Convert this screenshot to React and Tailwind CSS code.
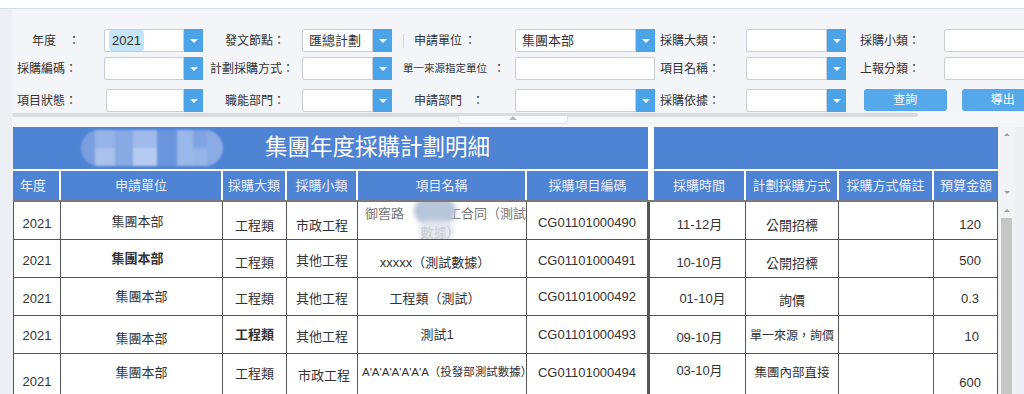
import React from 'react';

const FONT = { fontFamily: '"Liberation Sans", "Noto Sans CJK TC", sans-serif' };

function Arrow() {
    return (
        <div className="w-[19px] h-full bg-[#4ba4e8] flex items-center justify-center">
            <div className="w-0 h-0 border-l-[4px] border-r-[4px] border-t-[4px] border-l-transparent border-r-transparent border-t-white"></div>
        </div>
    );
}

function Sel({ value, hl, arrow = true, className = '' }) {
    return (
        <div className={`flex h-[23px] ${className}`}>
            <div className="flex-1 bg-white border border-[#c9ced6] rounded-l-[2px] flex items-center pl-[4px] text-[13px] text-[#333] overflow-hidden whitespace-nowrap">
                {hl ? <span className="bg-[#c4e5f7] rounded-[3px] px-[3px] py-[1px]">{value}</span> : <span className="pl-[2px]">{value}</span>}
            </div>
            {arrow && <Arrow />}
        </div>
    );
}

function Label({ children, className = '' }) {
    return <div className={`flex items-center h-[23px] whitespace-nowrap text-[#333] ${className}`}>{children}</div>;
}

const headers = [
    { t: '年度', c: 'justify-start pl-[7px]' },
    { t: '申請單位' },
    { t: '採購大類' },
    { t: '採購小類' },
    { t: '項目名稱' },
    { t: '採購項目編碼' },
];
const headers2 = ['採購時間', '計劃採購方式', '採購方式備註', '預算金額'];

// [text, classes, font-size class]
const rows = [
    {
        h: 'h-[38px]',
        cells: [
            ['2021', 'pt-[13px]'],
            ['集團本部', 'pt-[11px] pr-[8px]'],
            ['工程類', 'pt-[15px]'],
            ['市政工程', 'pt-[15px]'],
            ['__blur__', ''],
            ['CG01101000490', 'pt-[12px]'],
            ['11-12月', 'pt-[14px]'],
            ['公開招標', 'pt-[15px]'],
            ['', ''],
            ['120', 'pt-[14px] justify-end pr-[16px]'],
        ],
    },
    {
        h: 'h-[38px]',
        cells: [
            ['2021', 'pt-[12px]'],
            ['集團本部', 'pt-[10px] pr-[8px] font-bold text-[#111]'],
            ['工程類', 'pt-[14px]'],
            ['其他工程', 'pt-[12px]'],
            ['xxxxx（測試數據）', 'pt-[14px] pr-[14px]'],
            ['CG01101000491', 'pt-[12px]'],
            ['10-10月', 'pt-[14px]'],
            ['公開招標', 'pt-[15px]'],
            ['', ''],
            ['500', 'pt-[12px] justify-end pr-[16px]'],
        ],
    },
    {
        h: 'h-[38px]',
        cells: [
            ['2021', 'pt-[12px]'],
            ['集團本部', 'pt-[10px]'],
            ['工程類', 'pt-[12px]'],
            ['其他工程', 'pt-[12px]'],
            ['工程類（測試）', 'pt-[12px] pr-[14px]'],
            ['CG01101000492', 'pt-[10px]'],
            ['01-10月', 'pt-[12px] pl-[6px]'],
            ['詢價', 'pt-[14px]'],
            ['', ''],
            ['0.3', 'pt-[12px] justify-end pr-[18px]'],
        ],
    },
    {
        h: 'h-[38px]',
        cells: [
            ['2021', 'pt-[11px]'],
            ['集團本部', 'pt-[14px]'],
            ['工程類', 'pt-[10px] font-bold text-[#111]'],
            ['其他工程', 'pt-[12px]'],
            ['測試1', 'pt-[10px] pr-[10px]'],
            ['CG01101000493', 'pt-[10px]'],
            ['09-10月', 'pt-[13px]'],
            ['單一來源，詢價', 'pt-[11px]', 'text-[12px]'],
            ['', ''],
            ['10', 'pt-[12px] justify-end pr-[18px]'],
        ],
    },
    {
        h: 'h-[50px]',
        cells: [
            ['2021', 'pt-[19px]'],
            ['集團本部', 'pt-[10px]'],
            ['工程類', 'pt-[11px]'],
            ['市政工程', 'pt-[13px] pl-[4px]'],
            ["A'A'A'A'A'A'A（投發部測試數據）", 'pt-[9px] justify-start pl-[4px]', 'text-[11.5px]'],
            ['CG01101000494', 'pt-[10px]'],
            ['03-10月', 'pt-[8px]'],
            ['集團內部直接', 'pt-[10px]', 'text-[12.5px]'],
            ['', ''],
            ['600', 'pt-[20px] justify-end pr-[16px]'],
        ],
    },
];

const bodyW = ['w-[48px] border-l', 'w-[162px]', 'w-[64px]', 'w-[71px]', 'w-[169px]', 'w-[121px]'];
const headW = ['w-[48px]', 'w-[162px]', 'w-[64px]', 'w-[71px]', 'w-[169px]', 'w-[121px]'];
const bodyW2 = ['w-[92px]', 'w-[93px]', 'w-[95px]', 'w-[64px]'];

function BodyCell({ cell, w }) {
    const [t, c, size = 'text-[13px]'] = cell;
    if (t === '__blur__') {
        return (
            <div className={`${w} relative border-r border-b border-[#555] overflow-hidden text-[13px] text-[#777] leading-[19px] pt-[2px]`}>
                <div className="whitespace-nowrap pl-[7px]">
                    <span>御窖路</span>
                    <span className="inline-block w-[44px]"></span>
                    <span>工合同（測試</span>
                </div>
                <div className="text-center pr-[4px]">數據）</div>
                <div className="absolute left-[56px] top-[-4px] w-[42px] h-[26px] rounded-full bg-[#b8c6da] blur-[2px]"></div>
                <div className="absolute left-[60px] top-[18px] w-[36px] h-[22px] rounded-full bg-[#dfe3ea] blur-[2px] opacity-80"></div>
            </div>
        );
    }
    return (
        <div className={`${w} flex justify-center items-start border-r border-b border-[#555] text-[#333] leading-[18px] whitespace-nowrap overflow-hidden ${size} ${c}`}>
            {t}
        </div>
    );
}

export default function App() {
    return (
        <div className="w-[1024px] h-[394px] overflow-hidden bg-[#eceff3]" style={FONT}>
            <div className="h-[8px] bg-white"></div>
            <div className="border-t border-[#d3dcea] pl-[12px]">
                {/* Filter panel */}
                <div className="bg-[#f3f5f8] h-[104px] pt-[20px]">
                    <div className="grid grid-cols-[92px_99px_99px_90px_123px_140px_91px_100px_98px_100px] w-[1032px] text-[12px]">
                        {/* row 1 */}
                        <Label className="pl-[20px]">年度<span className="ml-[12px]">：</span></Label>
                        <Sel value="2021" hl />
                        <Label className="pl-[22px]">發文節點：</Label>
                        <Sel value="匯總計劃" />
                        <Label className="pl-[11px]"><span className="w-px h-[14px] bg-[#d6d9de] mr-[10px]"></span>申請單位<span className="ml-[2px]">：</span></Label>
                        <Sel value="集團本部" />
                        <Label className="pl-[5px]">採購大類：</Label>
                        <Sel value="" />
                        <Label className="pl-[14px]">採購小類：</Label>
                        <Sel value="" arrow={false} />

                        {/* row 2 */}
                        <Label className="pl-[5px] mt-[5px]">採購編碼：</Label>
                        <Sel value="" className="mt-[5px]" />
                        <Label className="pl-[7px] mt-[5px]">計劃採購方式：</Label>
                        <Sel value="" className="mt-[5px]" />
                        <Label className="pl-[11px] mt-[5px]"><span className="text-[10.5px]">單一來源指定單位</span><span className="ml-[6px]">：</span></Label>
                        <Sel value="" arrow={false} className="mt-[5px]" />
                        <Label className="pl-[5px] mt-[5px]">項目名稱：</Label>
                        <Sel value="" className="mt-[5px]" />
                        <Label className="pl-[14px] mt-[5px]">上報分類：</Label>
                        <Sel value="" arrow={false} className="mt-[5px]" />

                        {/* row 3 */}
                        <Label className="pl-[5px] mt-[9px]">項目狀態：</Label>
                        <Sel value="" className="mt-[9px] ml-[2px]" />
                        <Label className="pl-[22px] mt-[9px]">職能部門：</Label>
                        <Sel value="" className="mt-[9px]" />
                        <Label className="pl-[22px] mt-[9px]">申請部門<span className="ml-[10px]">：</span></Label>
                        <Sel value="" className="mt-[9px]" />
                        <Label className="pl-[5px] mt-[9px]">採購依據：</Label>
                        <Sel value="" className="mt-[9px]" />
                        <div className="col-span-2 flex gap-[15px] pl-[18px] mt-[9px]">
                            <button className="w-[90px] h-[22px] bg-[#55a8ea] rounded-[3px] text-white text-[12px] flex items-center justify-center">查詢</button>
                            <button className="w-[90px] h-[22px] bg-[#55a8ea] rounded-[3px] text-white text-[12px] flex items-center justify-center">導出</button>
                        </div>
                    </div>
                </div>
                {/* splitter bar */}
                <div className="relative h-[14px] bg-[#f5f6f8]">
                    <div className="w-[906px] h-[4px] bg-[#d9dcdf] rounded-[2px]"></div>
                    <div className="absolute left-[446px] top-[3px] w-[110px] h-[8px] border border-t-0 border-[#e1e3e6] bg-[#fafbfc] rounded-b-[4px] flex justify-center">
                        <div className="w-0 h-0 border-l-[4px] border-r-[4px] border-b-[4px] border-l-transparent border-r-transparent border-b-[#b5b9be]"></div>
                    </div>
                </div>
            </div>

            {/* Table */}
            <div className="flex pl-[13px]">
                <div className="w-[1002px] bg-white flex flex-col">
                    {/* Header area */}
                    <div className="flex">
                        <div className="w-[985px] flex flex-col">
                            <div className="flex h-[44px] border-b-2 border-white">
                                <div className="relative w-[635px] bg-[#4f83d4] flex items-center pl-[252px] text-white text-[22.5px]">
                                    <div className="absolute left-[68px] top-[3px] w-[142px] h-[36px] rounded-full overflow-hidden flex blur-[1px] opacity-90">
                                        <div className="w-[14px] bg-[#7fa3e2]"></div>
                                        <div className="w-[20px] flex flex-col"><div className="flex-1 bg-[#9db9ea]"></div><div className="flex-1 bg-[#b4c8ef]"></div></div>
                                        <div className="w-[18px] bg-[#8eaee6]"></div>
                                        <div className="w-[24px] flex flex-col"><div className="flex-1 bg-[#a8c1ee]"></div><div className="flex-1 bg-[#c2d3f3]"></div></div>
                                        <div className="w-[20px] bg-[#6f97de]"></div>
                                        <div className="w-[16px] bg-[#a3bdec]"></div>
                                        <div className="w-[14px] flex flex-col"><div className="flex-1 bg-[#86a8e4]"></div><div className="flex-1 bg-[#9fbaea]"></div></div>
                                        <div className="flex-1 bg-[#93b1e8]"></div>
                                    </div>
                                    <span className="relative">集團年度採購計劃明細</span>
                                </div>
                                <div className="w-[6px]"></div>
                                <div className="w-[344px] bg-[#4f83d4]"></div>
                            </div>
                            <div className="flex h-[29px] text-[13px] text-[#e9effa]">
                                {headers.map((h, i) => (
                                    <div key={h.t} className={`${headW[i]} bg-[#4f83d4] flex items-center justify-center ${i < 5 ? 'border-r-2 border-white' : ''} ${h.c || ''}`}>{h.t}</div>
                                ))}
                                <div className="w-[6px]"></div>
                                {headers2.map((h, i) => (
                                    <div key={h} className={`${bodyW2[i]} bg-[#4f83d4] flex items-center justify-center ${i < 3 ? 'border-r-2 border-white' : ''}`}>{h}</div>
                                ))}
                            </div>
                        </div>
                        <div className="w-[17px] bg-[#f2f3f5] flex flex-col items-center justify-between py-[6px]">
                            <div className="w-0 h-0 border-l-[3px] border-r-[3px] border-b-[3px] border-l-transparent border-r-transparent border-b-[#a0a0a0]"></div>
                            <div className="w-0 h-0 border-l-[3px] border-r-[3px] border-t-[3px] border-l-transparent border-r-transparent border-t-[#a0a0a0]"></div>
                        </div>
                    </div>

                    {/* Body */}
                    <div className="flex">
                        <div className="w-[985px] flex flex-col border-t-2 border-[#7a7a7a]">
                            {rows.map((r, ri) => (
                                <div key={ri} className={`flex ${r.h}`}>
                                    {r.cells.slice(0, 6).map((c, ci) => (
                                        <BodyCell key={ci} cell={c} w={bodyW[ci]} />
                                    ))}
                                    <div className="w-[6px] border-l-2 border-b border-[#555]"></div>
                                    {r.cells.slice(6).map((c, ci) => (
                                        <BodyCell key={ci} cell={c} w={bodyW2[ci]} />
                                    ))}
                                </div>
                            ))}
                        </div>
                        <div className="w-[17px] bg-[#f2f3f5] flex flex-col items-center pt-[9px]">
                            <div className="w-0 h-0 border-l-[3px] border-r-[3px] border-b-[3px] border-l-transparent border-r-transparent border-b-[#a0a0a0]"></div>
                            <div className="mt-[6px] w-[11px] h-[200px] bg-[#c6c6c6]"></div>
                        </div>
                    </div>
                </div>
            </div>
        </div>
    );
}
